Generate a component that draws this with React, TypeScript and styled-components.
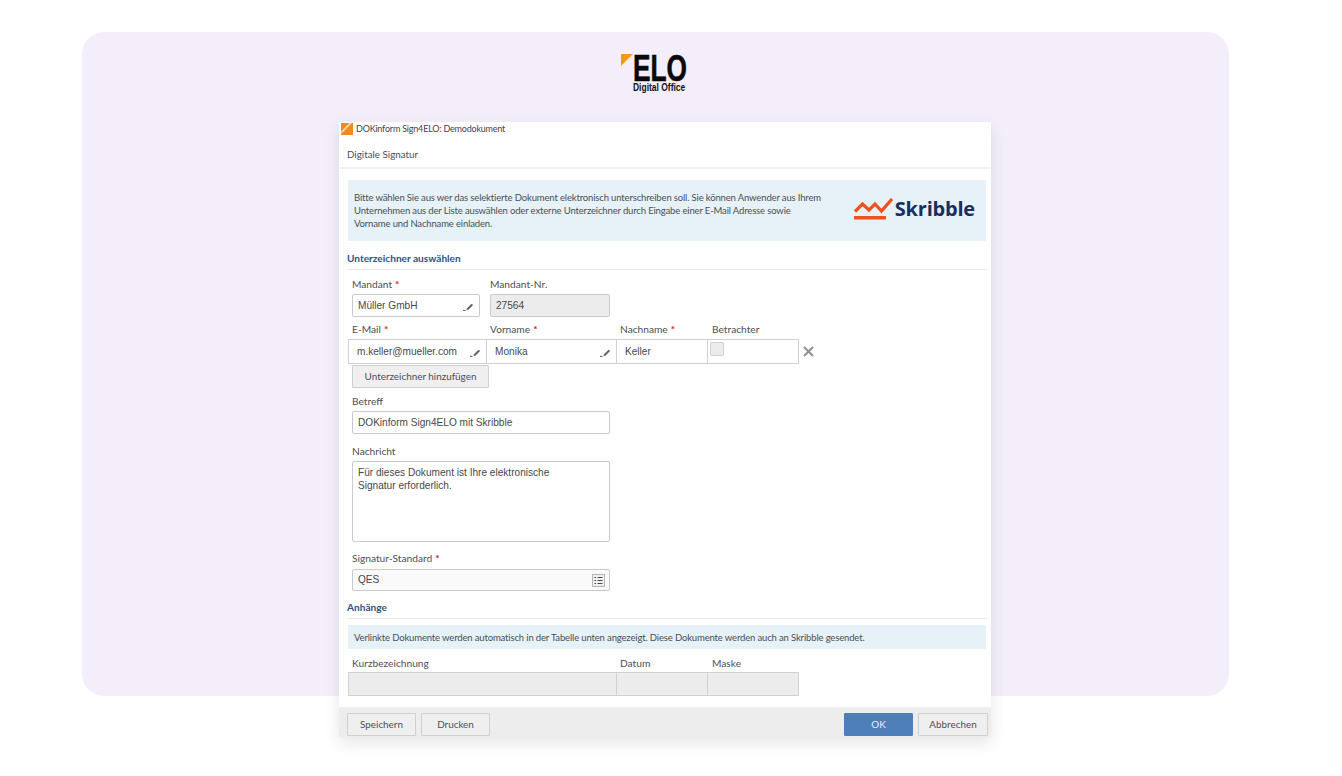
import React from "react";
import styled, { createGlobalStyle } from "styled-components";

const Global = createGlobalStyle`
  html, body { margin: 0; padding: 0; background: #fff; }
  body { width: 1342px; height: 776px; overflow: hidden; font-family: "Noto Sans", sans-serif; }
  * { box-sizing: border-box; }
`;

const UI = `"Lato", "Noto Sans", sans-serif`;
const FIELD = `"Liberation Sans", Arial, sans-serif`;

const Page = styled.div`
  padding: 32px 113px 0 82px;
`;
const Panel = styled.main`
  height: 664px;
  border-radius: 22px;
  background: #f3eefa;
  display: flex;
  flex-direction: column;
  align-items: center;
  padding-top: 22px;
`;
const Logo = styled.div`
  width: 68px;
  height: 42px;
  flex: none;
  margin-left: -2px;
  display: flex;
  flex-direction: column;
  position: relative;
`;
const LogoMark = styled.svg`
  position: absolute;
  left: 0;
  top: 0;
`;
const LogoName = styled.div`
  font: 700 37px/29px "Liberation Sans", sans-serif;
  color: #0a0a0a;
  height: 28px;
  margin-left: 12px;
  transform: scaleX(0.71);
  transform-origin: left center;
  white-space: nowrap;
  -webkit-text-stroke: 0.6px #0a0a0a;
`;
const LogoSub = styled.div`
  font: 700 11px/11px "Liberation Sans", sans-serif;
  color: #111;
  margin: 0 0 0 12px;
  transform: scaleX(0.77);
  transform-origin: left center;
  white-space: nowrap;
`;
const Dialog = styled.section`
  width: 652px;
  height: 615px;
  margin: 26px 0 0 19px;
  flex: none;
  background: #fff;
  display: flex;
  flex-direction: column;
  box-shadow: 0 6px 14px rgba(60, 60, 70, 0.12);
  font: 400 10.2px/14px ${UI};
  color: #4c4f54;
`;
const TitleBar = styled.header`
  height: 25px;
  padding: 0 2px;
  display: flex;
  align-items: flex-start;
  gap: 3px;
  color: #3f4247;
  font-size: 9px;
  letter-spacing: -0.2px;
`;
const TitleText = styled.span`
  line-height: 14px;
`;
const TitleIcon = styled.svg`
  flex: none;
  margin-top: 1px;
`;
const Subhead = styled.div`
  height: 22px;
  padding: 0 8px;
  border-bottom: 2px solid #f1f1f2;
  font-size: 9.8px;
  line-height: 14px;
`;
const Body = styled.div`
  padding: 11px 4px 0 8px;
  flex: 1;
`;
const Info = styled.div<{ $h: number; $top?: number }>`
  margin: ${(p) => p.$top ?? 0}px 1px 0 1px;
  height: ${(p) => p.$h}px;
  background: #e6f1f8;
  display: flex;
  align-items: center;
  justify-content: space-between;
  padding: 0 11px 0 6px;
  font-size: 9.5px;
  letter-spacing: -0.15px;
  line-height: 13px;
`;
const InfoText = styled.p`
  margin: 0;
  width: 472px;
`;
const Skribble = styled.div`
  display: flex;
  align-items: center;
  gap: 2px;
  margin-bottom: 4px;
`;
const SkribbleName = styled.span`
  font: 700 20px/24px "Open Sans", sans-serif;
  color: #1b2f5c;
  letter-spacing: -0.2px;
`;
const Section = styled.h2<{ $top: number }>`
  margin: ${(p) => p.$top}px 0 0;
  height: 19px;
  font: 700 10.1px/14px ${UI};
  color: #2f5284;
  border-bottom: 1px solid #e9e9ea;
`;
const Labels = styled.div<{ $cols: string; $top?: number }>`
  display: grid;
  grid-template-columns: ${(p) => p.$cols};
  margin-top: ${(p) => p.$top ?? 0}px;
  padding-left: 5px;
  height: 14px;
`;
const Label = styled.label`
  display: block;
  line-height: 14px;
  white-space: nowrap;
`;
const Req = styled.span`
  color: #cc2a22;
  font-weight: 700;
  margin-left: 3px;
`;
const Stack = styled.div<{ $top: number }>`
  margin: ${(p) => p.$top}px 0 0 5px;
`;
const Pair = styled.div`
  display: flex;
  gap: 10px;
  margin: 3px 0 0 5px;
`;
const Input = styled.div<{ $w: number; $h?: number; $bg?: string; $alignTop?: boolean }>`
  width: ${(p) => p.$w}px;
  height: ${(p) => p.$h ?? 23}px;
  background: ${(p) => p.$bg ?? "#fff"};
  border: 1px solid #c9cacb;
  border-radius: 2px;
  display: flex;
  align-items: ${(p) => (p.$alignTop ? "flex-start" : "center")};
  justify-content: space-between;
  padding: ${(p) => (p.$alignTop ? "5px 5px 3px" : "1px 5px 0")};
  font: 400 10.1px/12.5px ${FIELD};
  color: #46484b;
  white-space: pre-line;
`;
const Cells = styled.div<{ $top: number }>`
  display: flex;
  align-items: center;
  margin: ${(p) => p.$top}px 0 0 1px;
`;
const Cell = styled.div<{ $w: number; $h?: number; $bg?: string }>`
  width: ${(p) => p.$w}px;
  height: ${(p) => p.$h ?? 25}px;
  margin-right: -1px;
  background: ${(p) => p.$bg ?? "#fff"};
  border: 1.5px solid #d0d1d2;
  display: flex;
  align-items: center;
  justify-content: space-between;
  padding: 0 5px 0 8px;
  font: 400 10.1px/14px ${FIELD};
  color: #46484b;
`;
const Check = styled.span`
  width: 14px;
  height: 14px;
  margin: -5px 0 0 -6px;
  border: 1px solid #cfd0d1;
  border-radius: 2px;
  background: #ececee;
`;
const Remove = styled.svg`
  margin-left: 5px;
`;
const Btn = styled.button<{ $w: number; $primary?: boolean }>`
  width: ${(p) => p.$w}px;
  height: 23px;
  padding: 0 0 1px;
  border: 1px solid ${(p) => (p.$primary ? "#4f7fb8" : "#cfd0d1")};
  border-radius: 1px;
  background: ${(p) => (p.$primary ? "#4f7fb8" : "#efeff0")};
  color: ${(p) => (p.$primary ? "#e8eef6" : "#4c4f54")};
  font: 400 9.9px/14px ${UI};
`;
const AddRow = styled.div`
  margin: 1px 0 0 5px;
  height: 23px;
  display: flex;
`;
const ListIcon = styled.svg`
  margin-right: -1px;
`;
const Footer = styled.footer`
  height: 30px;
  background: #ededee;
  display: flex;
  align-items: flex-start;
  padding: 6px 3px 0 8px;
  gap: 5px;
`;
const Spacer = styled.div`
  flex: 1;
`;

const Pencil = () => (
  <svg width="12" height="12" viewBox="0 0 12 12">
    <path d="M4.8 8.6 9.6 3.8l1.5 1.3-4.7 4.6-1.7.2z" fill="#5f6266" />
    <path d="M1 10.4h2.6" stroke="#55585c" strokeWidth="1" />
  </svg>
);

export default function App() {
  return (
    <Page>
      <Global />
      <Panel>
        <Logo>
          <LogoMark width="12" height="12" viewBox="0 0 12 12">
            <path d="M0 0h12L0 12z" fill="#f39a12" />
          </LogoMark>
          <LogoName>ELO</LogoName>
          <LogoSub>Digital Office</LogoSub>
        </Logo>
        <Dialog>
          <TitleBar>
            <TitleIcon width="12" height="12" viewBox="0 0 12 12">
              <rect width="12" height="12" fill="#f18a1c" />
              <path d="M0 8.5 8.5 0H11L0 11z" fill="#fbd9a8" />
            </TitleIcon>
            <TitleText>DOKinform Sign4ELO: Demodokument</TitleText>
          </TitleBar>
          <Subhead>Digitale Signatur</Subhead>
          <Body>
            <Info $h={61}>
              <InfoText>
                Bitte wählen Sie aus wer das selektierte Dokument elektronisch unterschreiben soll. Sie können Anwender aus Ihrem Unternehmen aus der Liste auswählen oder externe Unterzeichner durch Eingabe einer E-Mail Adresse sowie Vorname und Nachname einladen.
              </InfoText>
              <Skribble>
                <svg width="39" height="22" viewBox="0 0 39 22">
                  <path d="M1 13.5 8.5 6 15 12l6-6 6.5 7L38 1" fill="none" stroke="#f0521c" strokeWidth="3.2" />
                  <rect x="0" y="18" width="32" height="3.5" fill="#f0521c" />
                </svg>
                <SkribbleName>Skribble</SkribbleName>
              </Skribble>
            </Info>
            <Section $top={10}>Unterzeichner auswählen</Section>
            <Labels $cols="138px 130px" $top={7}>
              <Label>Mandant<Req>*</Req></Label>
              <Label>Mandant-Nr.</Label>
            </Labels>
            <Pair>
              <Input $w={128}>Müller GmbH<Pencil /></Input>
              <Input $w={120} $bg="#ececed">27564</Input>
            </Pair>
            <Labels $cols="138px 130px 92px 90px" $top={5}>
              <Label>E-Mail<Req>*</Req></Label>
              <Label>Vorname<Req>*</Req></Label>
              <Label>Nachname<Req>*</Req></Label>
              <Label>Betrachter</Label>
            </Labels>
            <Cells $top={3}>
              <Cell $w={139}>m.keller@mueller.com<Pencil /></Cell>
              <Cell $w={131}>Monika<Pencil /></Cell>
              <Cell $w={92}>Keller</Cell>
              <Cell $w={92}><Check /></Cell>
              <Remove width="11" height="11" viewBox="0 0 11 11">
                <path d="M1 1l9 9M10 1l-9 9" stroke="#8a8c8f" strokeWidth="1.8" />
              </Remove>
            </Cells>
            <AddRow><Btn $w={137}>Unterzeichner hinzufügen</Btn></AddRow>
            <Labels $cols="1fr" $top={6}><Label>Betreff</Label></Labels>
            <Stack $top={3}><Input $w={258}>DOKinform Sign4ELO mit Skribble</Input></Stack>
            <Labels $cols="1fr" $top={10}><Label>Nachricht</Label></Labels>
            <Stack $top={3}>
              <Input $w={258} $h={81} $alignTop>{"Für dieses Dokument ist Ihre elektronische\nSignatur erforderlich."}</Input>
            </Stack>
            <Labels $cols="1fr" $top={9}><Label>Signatur-Standard<Req>*</Req></Label></Labels>
            <Stack $top={4}>
              <Input $w={258} $h={22} $bg="#f9f9fa">QES
                <ListIcon width="13" height="13" viewBox="0 0 13 13">
                  <rect x="0.5" y="0.5" width="12" height="12" fill="#efeff0" stroke="#b5b6b8" />
                  <path d="M2.5 3.5h1.5M5.5 3.5h5M2.5 6.5h1.5M5.5 6.5h5M2.5 9.5h1.5M5.5 9.5h5" stroke="#4a4c50" />
                </ListIcon>
              </Input>
            </Stack>
            <Section $top={9}>Anhänge</Section>
            <Info $h={24} $top={6}>Verlinkte Dokumente werden automatisch in der Tabelle unten angezeigt. Diese Dokumente werden auch an Skribble gesendet.</Info>
            <Labels $cols="268px 92px 90px" $top={7}>
              <Label>Kurzbezeichnung</Label>
              <Label>Datum</Label>
              <Label>Maske</Label>
            </Labels>
            <Cells $top={2}>
              <Cell $w={269} $h={24} $bg="#ececed" />
              <Cell $w={92} $h={24} $bg="#ececed" />
              <Cell $w={92} $h={24} $bg="#ececed" />
            </Cells>
          </Body>
          <Footer>
            <Btn $w={69}>Speichern</Btn>
            <Btn $w={69}>Drucken</Btn>
            <Spacer />
            <Btn $w={69} $primary>OK</Btn>
            <Btn $w={70}>Abbrechen</Btn>
          </Footer>
        </Dialog>
      </Panel>
    </Page>
  );
}
